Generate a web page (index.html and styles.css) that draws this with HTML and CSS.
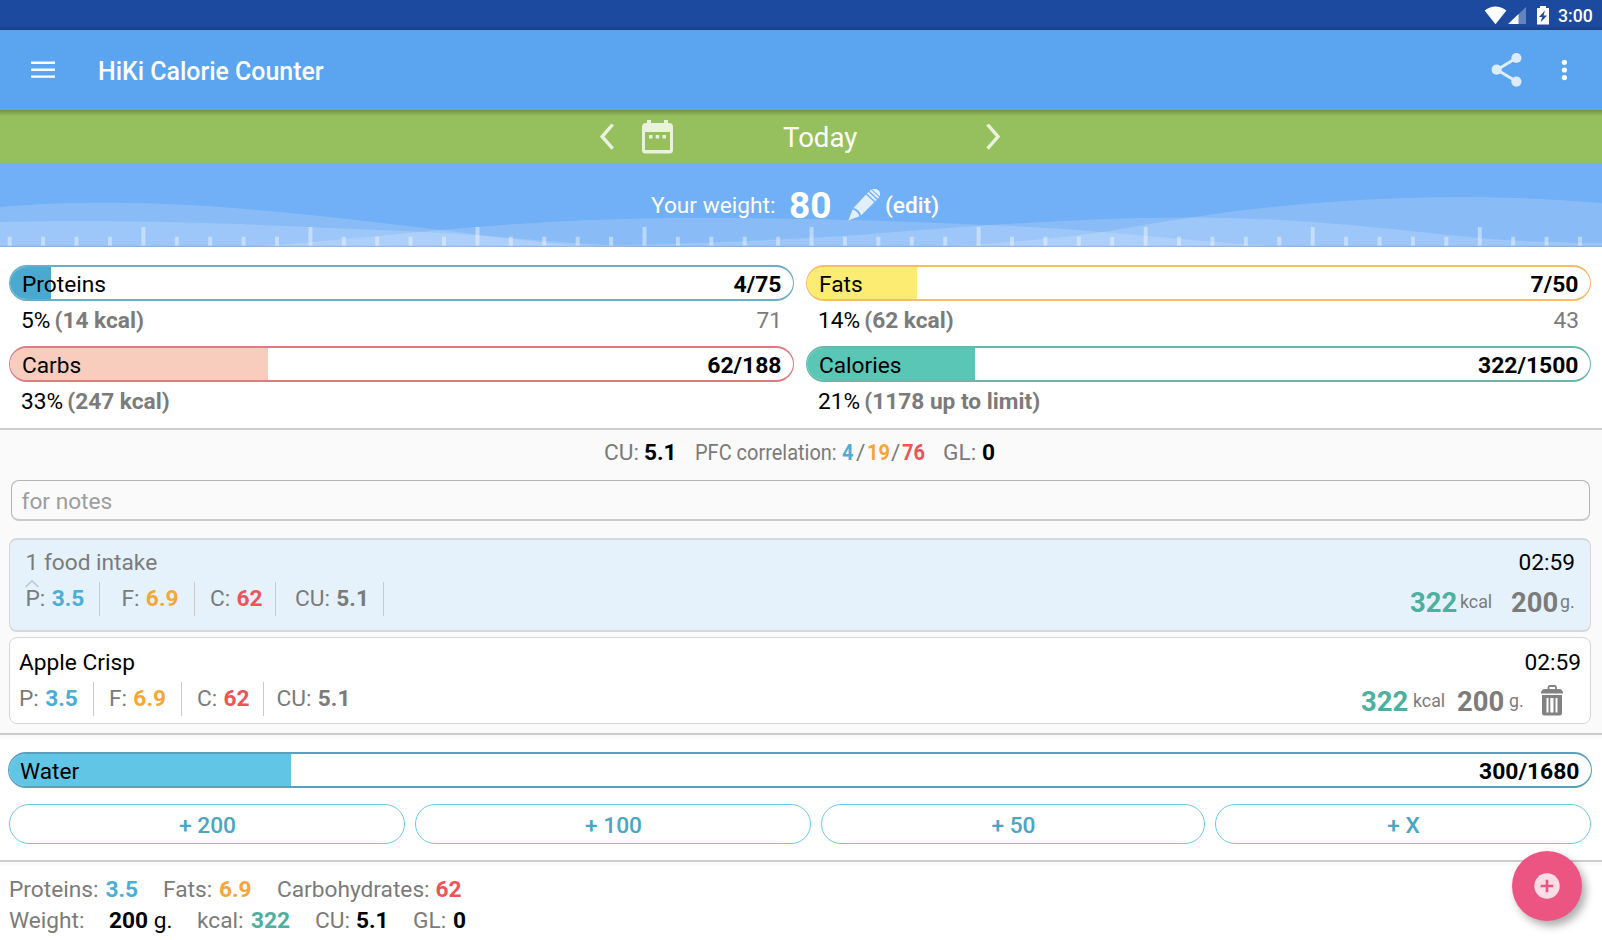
FILE: index.html
```html
<!DOCTYPE html>
<html lang="en">
<head>
<meta charset="utf-8">
<title>HiKi Calorie Counter</title>
<link rel="stylesheet" href="styles.css">
</head>
<body>
<header class="status">
  <svg class="status-icons" viewBox="0 0 68 20" width="68" height="20">
    <path d="M0.6 4.6Q11.5-3.4 22.4 4.6L11.5 18.2Z" fill="#fff"/>
    <path d="M42 1V18H24.200Z" fill="#6385bd"/>
    <path d="M34.500 8V18H24.200Z" fill="#fff"/>
    <path d="M53 2h3V0h6v2h3v16.500H53Z" fill="#fff"/>
    <path d="M61 4.500L55 11h3.300l-1.800 5.500L63 9.500h-3.500z" fill="#1c4a9e"/>
  </svg>
  <span class="clock">3:00</span>
</header>

<div class="appbar">
  <svg class="menu" viewBox="0 0 24 18" width="24" height="18"><path d="M0 1.800h24M0 8.700h24M0 15.600h24" stroke="#fff" stroke-width="2.400"/></svg>
  <h1 class="title">HiKi Calorie Counter</h1>
  <svg class="share" viewBox="0 0 32 36" width="32" height="36" fill="#dcecfc">
    <path d="M25.500 6L6 17.700L25.500 29.500" fill="none" stroke="#dcecfc" stroke-width="3"/>
    <circle cx="25.400" cy="6" r="5.100"/><circle cx="5.600" cy="17.700" r="5.100"/><circle cx="25.400" cy="29.600" r="5.100"/>
  </svg>
  <svg class="more" viewBox="0 0 6 22" width="6" height="22" fill="#fff"><circle cx="3.400" cy="3.300" r="2.600"/><circle cx="3.400" cy="11" r="2.600"/><circle cx="3.400" cy="18.600" r="2.600"/></svg>
</div>

<nav class="datebar">
  <svg class="prev" viewBox="0 0 14 26" width="14" height="26"><path d="M12.700 .5L2.200 12.600l10.500 12" fill="none" stroke="#e9f2dc" stroke-width="3.400"/></svg>
  <svg class="calendar" viewBox="0 0 31 34" width="31" height="34">
    <path fill="#e9f2dc" fill-rule="evenodd" d="M5 0h4v3h13V0h4v3h1a4 4 0 0 1 4 4v23a3.500 3.500 0 0 1-3.500 3.500h-24A3.500 3.500 0 0 1 0 30V7a4 4 0 0 1 4-4h1zM3 12v18h25V12z"/>
    <path fill="#e9f2dc" d="M7 15h3.500v3.500H7zM13.700 15h3.500v3.500h-3.500zM20.400 15h3.500v3.500h-3.500z"/>
  </svg>
  <span class="today">Today</span>
  <svg class="next" viewBox="0 0 14 26" width="14" height="26"><path d="M1.500 .5L12 12.600L1.500 24.600" fill="none" stroke="#e9f2dc" stroke-width="3.400"/></svg>
</nav>

<section class="weight">
  <svg class="waves" viewBox="0 163 1602 84" width="1602" height="84">
    <g fill="#fff" fill-opacity=".17">
      <path d="M0 207C60 201 160 201 240 208.500C330 216 410 226 480 235Q540 243 600 247H0Z"/>
      <path d="M0 222Q100 219 240 224C340 229 440 231 510 238Q580 244 640 247H0Z"/>
      <path d="M250 247Q350 239 440 230C540 221 620 218 700 218C800 218 900 221 1000 225.500C1110 230 1180 241 1290 247Z"/>
      <path d="M530 247Q700 245 860 235C960 227 1070 218 1184 217.500C1310 217.500 1400 231 1490 239Q1550 243 1602 243V247Z"/>
      <path d="M940 247Q1040 241 1110 231C1180 219 1290 198 1457 197Q1530 197 1602 203V247Z"/>
    </g>
    <path d="M0 241.200H1602" stroke="#fff" stroke-opacity=".4" stroke-width="9" stroke-dasharray="4 29.410" stroke-dashoffset="-7.700"/>
    <path d="M0 232H1602" stroke="#fff" stroke-opacity=".4" stroke-width="10" stroke-dasharray="4 163.050" stroke-dashoffset="-141.400"/>
    <path d="M0 246.300H1602" stroke="#7e9fc8" stroke-opacity=".6"/>
  </svg>
  <span class="weight-label">Your weight:</span>
  <b class="weight-value">80</b>
  <svg class="pencil" viewBox="0 0 32 32" width="32" height="32" fill="#e1eefd">
    <path d="M.3 31.500L4.600 20.500Q10 22 11.500 27.300Z"/>
    <path d="M5.500 19L18 5.500L26.300 13.200L13 26.500Q11.500 20.500 5.500 19Z"/>
    <path d="M19 4.600l1.500-1.600 8.300 7.700-1.500 1.600zM21.500 2.100l1.400-1.500 8.300 7.700-1.400 1.500z"/>
    <path d="M24 .2Q27-1.500 30.500 1.500T31.700 7.200z"/>
  </svg>
  <span class="edit">(edit)</span>
</section>

<section class="macros">
  <div class="macro proteins">
    <div class="bar"><i class="fill" style="width:41px"></i><span>Proteins</span><b>4/75</b></div>
    <div class="detail"><span>5% <b>(14 kcal)</b></span><span class="left">71</span></div>
  </div>
  <div class="macro fats">
    <div class="bar"><i class="fill" style="width:110px"></i><span>Fats</span><b>7/50</b></div>
    <div class="detail"><span>14% <b>(62 kcal)</b></span><span class="left">43</span></div>
  </div>
  <div class="macro carbs">
    <div class="bar"><i class="fill" style="width:258px"></i><span>Carbs</span><b>62/188</b></div>
    <div class="detail"><span>33% <b>(247 kcal)</b></span></div>
  </div>
  <div class="macro calories">
    <div class="bar"><i class="fill" style="width:168px"></i><span>Calories</span><b>322/1500</b></div>
    <div class="detail"><span>21% <b>(1178 up to limit)</b></span></div>
  </div>
</section>

<main class="log">
  <div class="summary">
    <span>CU:</span><b class="black">5.1</b><span><i class="narrow">PFC correlation:</i></span>
    <b class="p"><i class="narrow">4</i></b><span>/</span><b class="f"><i class="narrow">19</i></b><span>/</span><b class="c"><i class="narrow">76</i></b>
    <span>GL:</span><b class="black">0</b>
  </div>
  <div class="notes">for notes</div>

  <article class="card intake">
    <div class="head"><span>1 food intake</span><time>02:59</time></div>
    <svg class="caret" viewBox="0 0 14 8" width="14" height="8"><path d="M.5 7L7 1l6.500 6" fill="none" stroke="#b9c5cf" stroke-width="1.500"/></svg>
    <div class="nutrients">
      <span>P: <b class="p">3.5</b></span><span>F: <b class="f">6.9</b></span><span>C: <b class="c">62</b></span><span>CU: <b>5.1</b></span>
    </div>
    <div class="totals"><b class="k">322</b><small>kcal</small><b>200</b><small>g.</small></div>
  </article>

  <article class="card food">
    <div class="head"><span class="black">Apple Crisp</span><time>02:59</time></div>
    <div class="nutrients">
      <span>P: <b class="p">3.5</b></span><span>F: <b class="f">6.9</b></span><span>C: <b class="c">62</b></span><span>CU: <b>5.1</b></span>
    </div>
    <div class="totals"><b class="k">322</b><small>kcal</small><b>200</b><small>g.</small>
      <svg class="trash" viewBox="0 0 24 31" width="24" height="31">
        <path d="M8.500 4V2.500Q8.500 1 10 1h4.500Q16 1 16 2.500V4" fill="none" stroke="#828282" stroke-width="1.800"/>
        <path d="M1 8.500Q1 4 5 4h14q4 0 4 4.500z" fill="#828282"/>
        <path fill-rule="evenodd" d="M2 10h20v18q0 2.500-2.500 2.500h-15Q2 30.500 2 28zM6.500 13v14.500h2V13zM10.300 13v14.500h3.200V13zM15.500 13v14.500h2V13z" fill="#828282"/>
      </svg>
    </div>
  </article>
</main>

<section class="water">
  <div class="bar water-bar"><i class="fill" style="width:282px"></i><span>Water</span><b>300/1680</b></div>
  <div class="add"><button>+ 200</button><button>+ 100</button><button>+ 50</button><button>+ X</button></div>
</section>

<footer class="footer">
  <div class="row row1"><span>Proteins:</span><b class="p">3.5</b><span>Fats:</span><b class="f">6.9</b><span>Carbohydrates:</span><b class="c">62</b></div>
  <div class="row row2"><span>Weight:</span><span class="black"><b>200</b> g.</span><span>kcal:</span><b class="k">322</b><span>CU:</span><b class="black">5.1</b><span>GL:</span><b class="black">0</b></div>
</footer>

<div class="fab"><svg viewBox="0 0 26 26" width="26" height="26"><circle cx="13" cy="13" r="12.700" fill="#fadbe6"/><path d="M13 6.700v12.600M6.700 13h12.600" stroke="#ec5482" stroke-width="2.600"/></svg></div>
</body>
</html>
```

FILE: styles.css
```css
* { box-sizing: border-box; }

body {
  margin: 0;
  width: 1602px;
  height: 940px;
  overflow: hidden;
  position: relative;
  background: #fff;
  color: #7b7b7b;
  font: 22.700px/30px Roboto, "Noto Sans", sans-serif;
}

svg { display: block; flex: none; }
i { font-style: normal; }
b { font-weight: 700; }
.black { color: #000; }
.p { color: #4baed6; }
.f { color: #f6a638; }
.c { color: #ef5358; }
.k { color: #4caf9f; }

/* Status bar */
.status {
  height: 30px;
  display: flex;
  justify-content: flex-end;
  padding: 6px 10px 0 0;
  background: linear-gradient(#1c4a9e 26px, #1b3f84);
}
.clock {
  width: 34px;
  margin-left: 6px;
  color: #fff;
  font-size: 17.700px;
  line-height: 20px;
  font-weight: 500;
  white-space: nowrap;
}

/* App bar */
.appbar {
  height: 80px;
  display: flex;
  align-items: center;
  padding: 0 35px 0 31px;
  background: #5ba4f0;
}
.title {
  margin: 4px auto 0 43px;
  color: #fff;
  font-size: 24.900px;
  line-height: 30px;
  font-weight: 500;
}
.share { margin-right: 38px; }

/* Date switcher */
.datebar {
  height: 53px;
  display: flex;
  align-items: center;
  padding-left: 600px;
  background: linear-gradient(#749248, #96bf5d 6px);
}
.calendar { margin-left: 28px; }
.today {
  width: 203px;
  margin: 2px 0 0 110px;
  color: #fff;
  font-size: 27.600px;
}

/* Weight */
.weight {
  height: 84px;
  display: flex;
  position: relative;
  padding: 28px 0 0 651px;
  background: #71aff6;
  color: #fff;
  white-space: nowrap;
}
.waves { position: absolute; left: 0; top: 0; }
.weight-label, .weight-value, .pencil, .edit { position: relative; }
.weight-label { width: 138px; }
.weight-value { width: 59px; font-size: 37px; }
.pencil { margin-top: -2px; }
.edit { margin-left: 5px; font-weight: 500; }

/* Progress bars */
.bar {
  height: 36px;
  display: flex;
  justify-content: space-between;
  position: relative;
  padding: 3px 11.500px 0 12px;
  overflow: hidden;
  border: solid var(--line);
  border-width: 2px 1px;
  border-radius: 18px;
  background: #fff;
  color: #000;
}
.bar > span, .bar > b { position: relative; }
.bar > b { font-size: 22.900px; }
.fill {
  position: absolute;
  inset: 0 auto 0 0;
  background: var(--fill);
}
.macros {
  height: 183px;
  display: grid;
  grid-template-columns: 785px 785px;
  grid-template-rows: 81px 81px;
  column-gap: 12px;
  padding: 18px 0 0 9px;
  border-bottom: 2px solid #ccc;
}
.proteins { --line: #69aec7; --fill: #4ba9d0; }
.fats { --line: #f8bc68; --fill: #fdec72; }
.carbs { --line: #df7a80; --fill: #f8cdbe; }
.calories { --line: #68b7ac; --fill: #5ac6b6; }
.detail {
  display: flex;
  justify-content: space-between;
  padding: 5px 12px 0;
  color: #000;
}
.detail b { color: #7b7b7b; margin-left: -1.500px; }
.left { color: #7b7b7b; }

/* Day log */
.log {
  height: 305px;
  padding: 8px 0 0 9px;
  background: #fafafa;
  border-bottom: 2px solid #ccc;
}
.summary {
  height: 30px;
  display: grid;
  grid-template-columns: 40px 51px 147px 14px 11px 24px 11px 41px 39px 20px;
  padding-left: 595px;
  white-space: nowrap;
}
.narrow { display: inline-block; transform: scaleX(.88); transform-origin: 0 50%; }
.notes {
  width: 1579px;
  height: 41px;
  margin: 12px 0 0 1.500px;
  padding: 6px 10px;
  border: 1px solid #b5b5b5;
  border-bottom: 2px solid #cacaca;
  border-radius: 8px;
  color: #9d9d9d;
}
.card {
  width: 1582px;
  display: grid;
  grid-template-columns: 1fr auto;
  align-content: start;
  border: 1px solid #d5d8db;
  border-radius: 8px;
}
.head {
  grid-column: 1 / 3;
  display: flex;
  justify-content: space-between;
}
time { color: #000; }
.nutrients { display: grid; height: 34px; white-space: nowrap; }
.nutrients span { border-right: 1px solid #c8ccd0; line-height: 34px; }
.nutrients b { margin-left: .7px; }
.totals {
  display: grid;
  font-size: 27.400px;
  white-space: nowrap;
}
.totals small { font-size: 17.800px; line-height: 28px; }
.intake {
  height: 94px;
  margin-top: 17px;
  padding: 8px 0 0 15.500px;
  position: relative;
  background: #e5f2fc;
  border-width: 2px 1px;
}
.intake .head { padding-right: 15px; }
.caret { position: absolute; left: 15px; top: 40px; }
.intake .nutrients { grid-template-columns: 74.500px 95px 81px 108px; margin-top: 4px; }
.intake .nutrients span + span { padding-left: 21.500px; }
.intake .nutrients span:nth-child(3) { padding-left: 15px; }
.intake .nutrients span:nth-child(4) { padding-left: 19px; }
.intake .totals { grid-template-columns: 50px 51px 49px 30px; margin-top: 10px; }
.food {
  height: 87px;
  margin-top: 5px;
  padding: 10px 0 0 9px;
  background: #fff;
}
.food .head { padding-right: 9px; }
.food .nutrients { grid-template-columns: 75px 88px 82px 108px; margin-top: 4px; }
.food .nutrients span + span { padding-left: 15px; }
.food .nutrients span:last-child { border: 0; padding-left: 12.500px; }
.food .totals { grid-template-columns: 52px 44px 52px 31px 50px; margin-top: 9px; }
.food .trash { margin-top: -2px; }

/* Water */
.water {
  height: 127px;
  padding: 17px 10px 0 8px;
  border-bottom: 2px solid #ccc;
  background: linear-gradient(#fafafa 3px, #fff 4px);
}
.water-bar { --line: #5a9fbb; --fill: #61c5e5; padding-left: 11px; }
.add {
  display: grid;
  grid-template-columns: 396px 396px 384px 376px;
  column-gap: 10px;
  margin: 16px 0 0 1px;
}
.add button {
  height: 40px;
  border: 1.500px solid #6cc9e6;
  border-radius: 20px;
  background: #fff;
  color: #4ba5c5;
  font: 500 22.700px/36px Roboto, sans-serif;
  padding: 3px 0 0 1px;
}

/* Footer totals */
.footer {
  height: 78px;
  padding: 13px 0 0 9px;
  background: linear-gradient(#fafafa 3px, #fff 4px);
}
.row { display: grid; height: 31px; white-space: nowrap; }
.row1 { grid-template-columns: 96.500px 57.500px 56px 58px 158.500px 50px; }
.row2 { grid-template-columns: 100px 88px 54px 64px 41px 57px 40px 30px; }

.fab {
  position: absolute;
  left: 1512px;
  top: 851px;
  width: 70px;
  height: 70px;
  display: grid;
  place-items: center;
  border-radius: 50%;
  background: #ec5482;
  box-shadow: 4px 5px 8px rgba(0, 0, 0, .32);
}
```
